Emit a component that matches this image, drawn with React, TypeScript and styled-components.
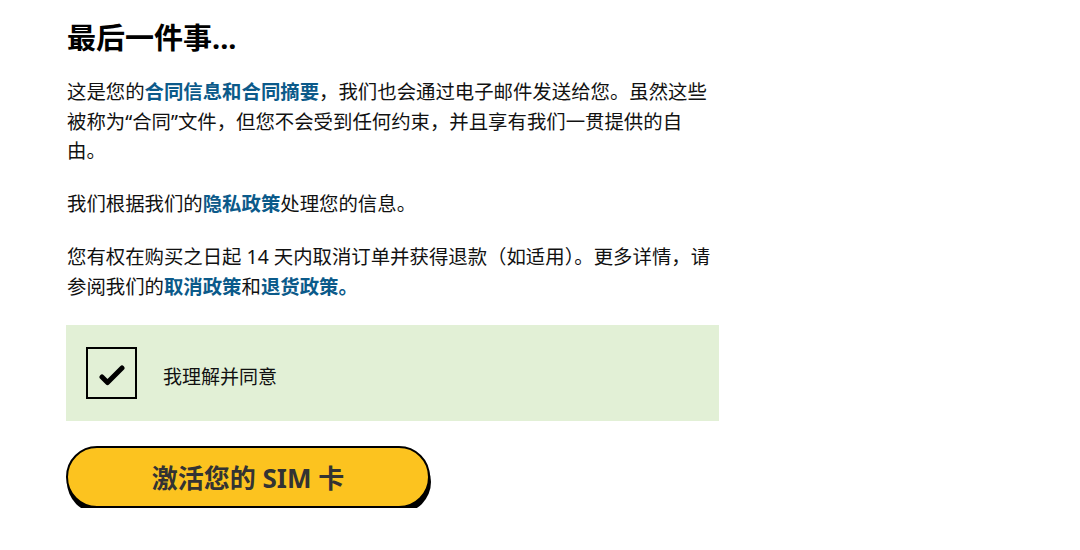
import { createGlobalStyle, styled } from 'styled-components';

const GlobalStyle = createGlobalStyle`
  body {
    margin: 0;
    background: #fff;
    color: #111;
    font-family: 'Noto Sans', 'Noto Sans CJK SC', sans-serif;
  }
`;

const App = () => {
  return (
    <>
      <GlobalStyle />
      <Wrapper>
        <Title>最后一件事...</Title>
        <Paragraph>
          这是您的<Link>合同信息和合同摘要</Link>，我们也会通过电子邮件发送给您。虽然这些被称为“合同”文件，但您不会受到任何约束，并且享有我们一贯提供的自由。
        </Paragraph>
        <Paragraph>
          我们根据我们的<Link>隐私政策</Link>处理您的信息。
        </Paragraph>
        <Paragraph>
          您有权在购买之日起 14 天内取消订单并获得退款（如适用）。更多详情，请参阅我们的
          <Link>取消政策</Link>和<Link>退货政策。</Link>
        </Paragraph>
        <AgreeBox>
          <CheckBox>
            <svg width="28" height="22" viewBox="0 0 28 22">
              <path
                d="M4 13 L9.5 18.5 L24 4"
                fill="none"
                stroke="#000"
                strokeWidth="5"
                strokeLinecap="round"
                strokeLinejoin="round"
              />
            </svg>
          </CheckBox>
          <AgreeLabel>我理解并同意</AgreeLabel>
        </AgreeBox>
        <ActivateButton>激活您的 SIM 卡</ActivateButton>
      </Wrapper>
    </>
  );
};

export default App;

const Wrapper = styled.main`
  width: 653px;
  padding: 20px 0 0 66px;
`;

const Title = styled.h1`
  margin: 0 0 21px 1px;
  font-size: 29px;
  font-weight: 700;
  line-height: 36px;
  color: #000;
`;

const Paragraph = styled.p`
  margin: 0 0 23.5px 1px;
  font-size: 19.4px;
  line-height: 29.5px;
  color: #111;
`;

const Link = styled.a`
  color: #0b5a8a;
  font-weight: 700;
  text-decoration: none;
  cursor: pointer;
`;

const AgreeBox = styled.div`
  display: flex;
  align-items: center;
  gap: 26px;
  height: 96px;
  margin-top: 1px;
  padding: 0 20px;
  box-sizing: border-box;
  background: #e2f0d6;
`;

const CheckBox = styled.div`
  display: flex;
  align-items: center;
  justify-content: center;
  width: 51px;
  height: 52px;
  box-sizing: border-box;
  border: 2px solid #000;
  padding-top: 4px;
`;

const AgreeLabel = styled.span`
  font-size: 19px;
  color: #111;
  padding-top: 6px;
`;

const ActivateButton = styled.button`
  display: flex;
  align-items: center;
  justify-content: center;
  margin-top: 25px;
  width: 364px;
  height: 62px;
  border: 2px solid #000;
  border-radius: 31px;
  background: #fcc31f;
  box-shadow: 1px 5px 0 #000;
  color: #333;
  font-family: 'Noto Sans', 'Noto Sans CJK SC', sans-serif;
  font-size: 26px;
  font-weight: 700;
  cursor: pointer;
`;
